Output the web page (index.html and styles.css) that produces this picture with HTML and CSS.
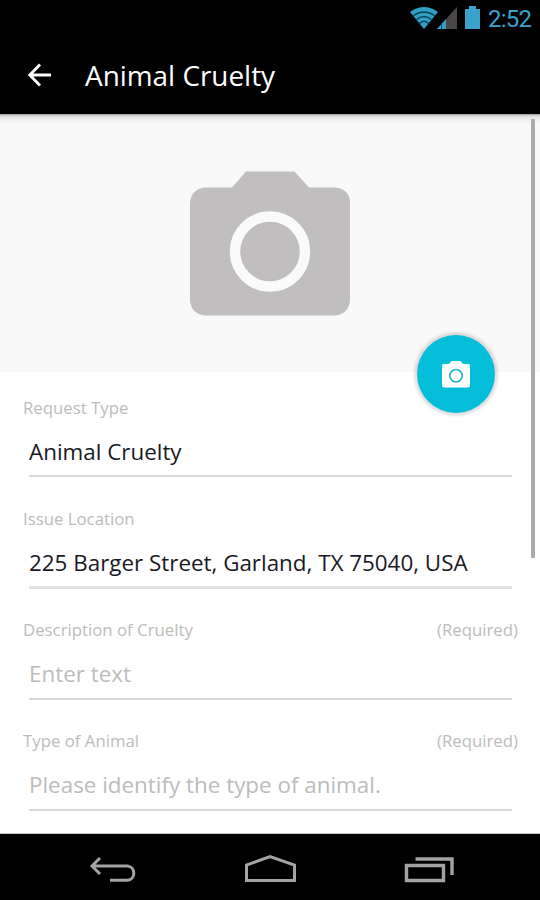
FILE: index.html
```html
<!DOCTYPE html>
<html lang="en">
<head>
<meta charset="utf-8">
<title>Animal Cruelty</title>
<link rel="stylesheet" href="styles.css">
</head>
<body>
<div class="screen">
  <div class="status">
    <svg class="wifi" width="29" height="22" viewBox="0 0 29 22"><path d="M0 5Q14 -5 28 5L14 22Z" fill="#319fc6"/><path d="M3 9Q14 1 25 9M6 13Q14 6 22 13M9.500 16.500Q14 12 18.500 16.500" fill="none" stroke="#0a4153" stroke-width="1.300"/></svg>
    <svg class="signal" width="20" height="22" viewBox="0 0 20 22"><path d="M20 0V22H0Z" fill="#4b4646"/><path d="M9 12V22H0Z" fill="#319fc6"/><path d="M4.500 16V22" stroke="#0a4153"/></svg>
    <svg class="battery" width="15" height="23" viewBox="0 0 15 23"><path d="M0 3H4V0H11V3H15V23H0Z" fill="#3ba3cb"/></svg>
    <span class="clock">2:52</span>
  </div>
  <header class="bar">
    <svg class="back" width="24" height="24" viewBox="0 0 24 24"><path d="M23 12H2M12 1.500L1.800 12L12 22.500" fill="none" stroke="#fff" stroke-width="2.800"/></svg>
    <h1>Animal Cruelty</h1>
  </header>
  <main class="content">
    <div class="photo">
      <svg width="160" height="145" viewBox="0 0 160 145"><path d="M56 0.500H104.500L119 16.500H145Q160 18 160 32V129Q159 143 145 144.500H15Q1 143 0 129V32Q1 18 15 16.500H42Z" fill="#c0bebf"/><circle cx="80" cy="80.500" r="35" fill="none" stroke="#fafafa" stroke-width="10.500"/></svg>
      <button class="fab" aria-label="Add photo"><svg width="28" height="27" viewBox="0 0 28 27"><path d="M2 3H7L9.500 0H18.500L21 3H26Q28 3 28 5V24.500Q28 26.500 26 26.500H2Q0 26.500 0 24.500V5Q0 3 2 3Z" fill="#fff"/><circle cx="14" cy="14.700" r="6.200" fill="none" stroke="#20b6d0" stroke-width="1.700"/></svg></button>
    </div>
    <div class="form">
      <section class="field"><div class="label"><span>Request Type</span></div><div class="value"><span>Animal Cruelty</span></div></section>
      <section class="field"><div class="label"><span>Issue Location</span></div><div class="value thick"><span>225 Barger Street, Garland, TX 75040, USA</span></div></section>
      <section class="field"><div class="label"><span>Description of Cruelty</span><span>(Required)</span></div><div class="value hint"><span>Enter text</span></div></section>
      <section class="field"><div class="label"><span>Type of Animal</span><span>(Required)</span></div><div class="value hint"><span>Please identify the type of animal.</span></div></section>
    </div>
    <div class="scroll"></div>
  </main>
  <nav class="nav">
    <svg width="180" height="66" viewBox="0 0 180 66"><path d="M100 24L92 32L100 40M92 32H127.500A7.200 7.200 0 0 1 127.500 46.300H110" fill="none" stroke="#a3a3a3" stroke-width="3"/></svg>
    <svg width="180" height="66" viewBox="0 0 180 66"><path d="M66.500 46.500V31L90 22.500L114.500 31V46.500Z" fill="none" stroke="#a3a3a3" stroke-width="3"/></svg>
    <svg width="180" height="66" viewBox="0 0 180 66"><path d="M46.500 31.500H83.500V46.500H46.500ZM55.500 25H92V41" fill="none" stroke="#a3a3a3" stroke-width="3.400"/></svg>
  </nav>
</div>
</body>
</html>
```
FILE: styles.css
```css
* { box-sizing: border-box; }
body { margin: 0; font-family: "Open Sans", "Noto Sans", sans-serif; }
.screen { width: 540px; height: 900px; display: flex; flex-direction: column; overflow: hidden; background: #fff; }
.status { flex: none; height: 37px; background: #000; display: flex; align-items: flex-start; justify-content: flex-end; padding: 7px 8px 0 0; }
.wifi { margin-right: -2px; }
.signal { margin-right: 8px; }
.battery { margin: -1px 8px 0 0; }
.clock { font: 24px/24px Roboto, sans-serif; color: #3ba3cb; width: 44px; white-space: nowrap; letter-spacing: -0.8px; }
.bar { flex: none; height: 77px; background: #000; display: flex; align-items: center; padding: 0 0 2px 28px; gap: 33px; color: #fff; }
.back { flex: none; }
h1 { margin: 0; font-size: 27.900px; line-height: 40px; font-weight: 400; white-space: nowrap; }
.content { position: relative; flex: none; height: 720px; border-bottom: 1px solid #c8c8c8; }
.photo { position: relative; height: 258px; padding: 57px 0 0 190px; background: linear-gradient(#999 0, #ddd 2px, #eee 5px, #f9f9f9 11px); }
.photo svg { display: block; }
.fab { position: absolute; left: 417px; top: 221px; width: 78px; height: 78px; border: 0; border-radius: 50%; padding: 0; display: flex; align-items: center; justify-content: center; background: #04bdd8; box-shadow: 0 0 3px 3px rgba(0,0,0,.13); }
.form { padding-top: 20px; }
.field { height: 111px; }
.label { height: 32px; padding: 0 22px 0 23px; display: flex; justify-content: space-between; font-size: 16.800px; line-height: 32px; color: #bcbcbc; white-space: nowrap; }
.value { margin: 0 28px 0 29px; height: 53px; border-bottom: 2px solid #d8d8d8; font-size: 22.400px; line-height: 56px; color: #191925; white-space: nowrap; }
.thick { border-bottom: 3px solid #e2e2e2; height: 54px; }
.hint { height: 54px; color: #bcbcbc; }
.scroll { position: absolute; left: 531px; top: 5px; width: 4px; height: 439px; background: #ababab; }
.nav { flex: none; height: 66px; display: flex; background: #000; }
```
